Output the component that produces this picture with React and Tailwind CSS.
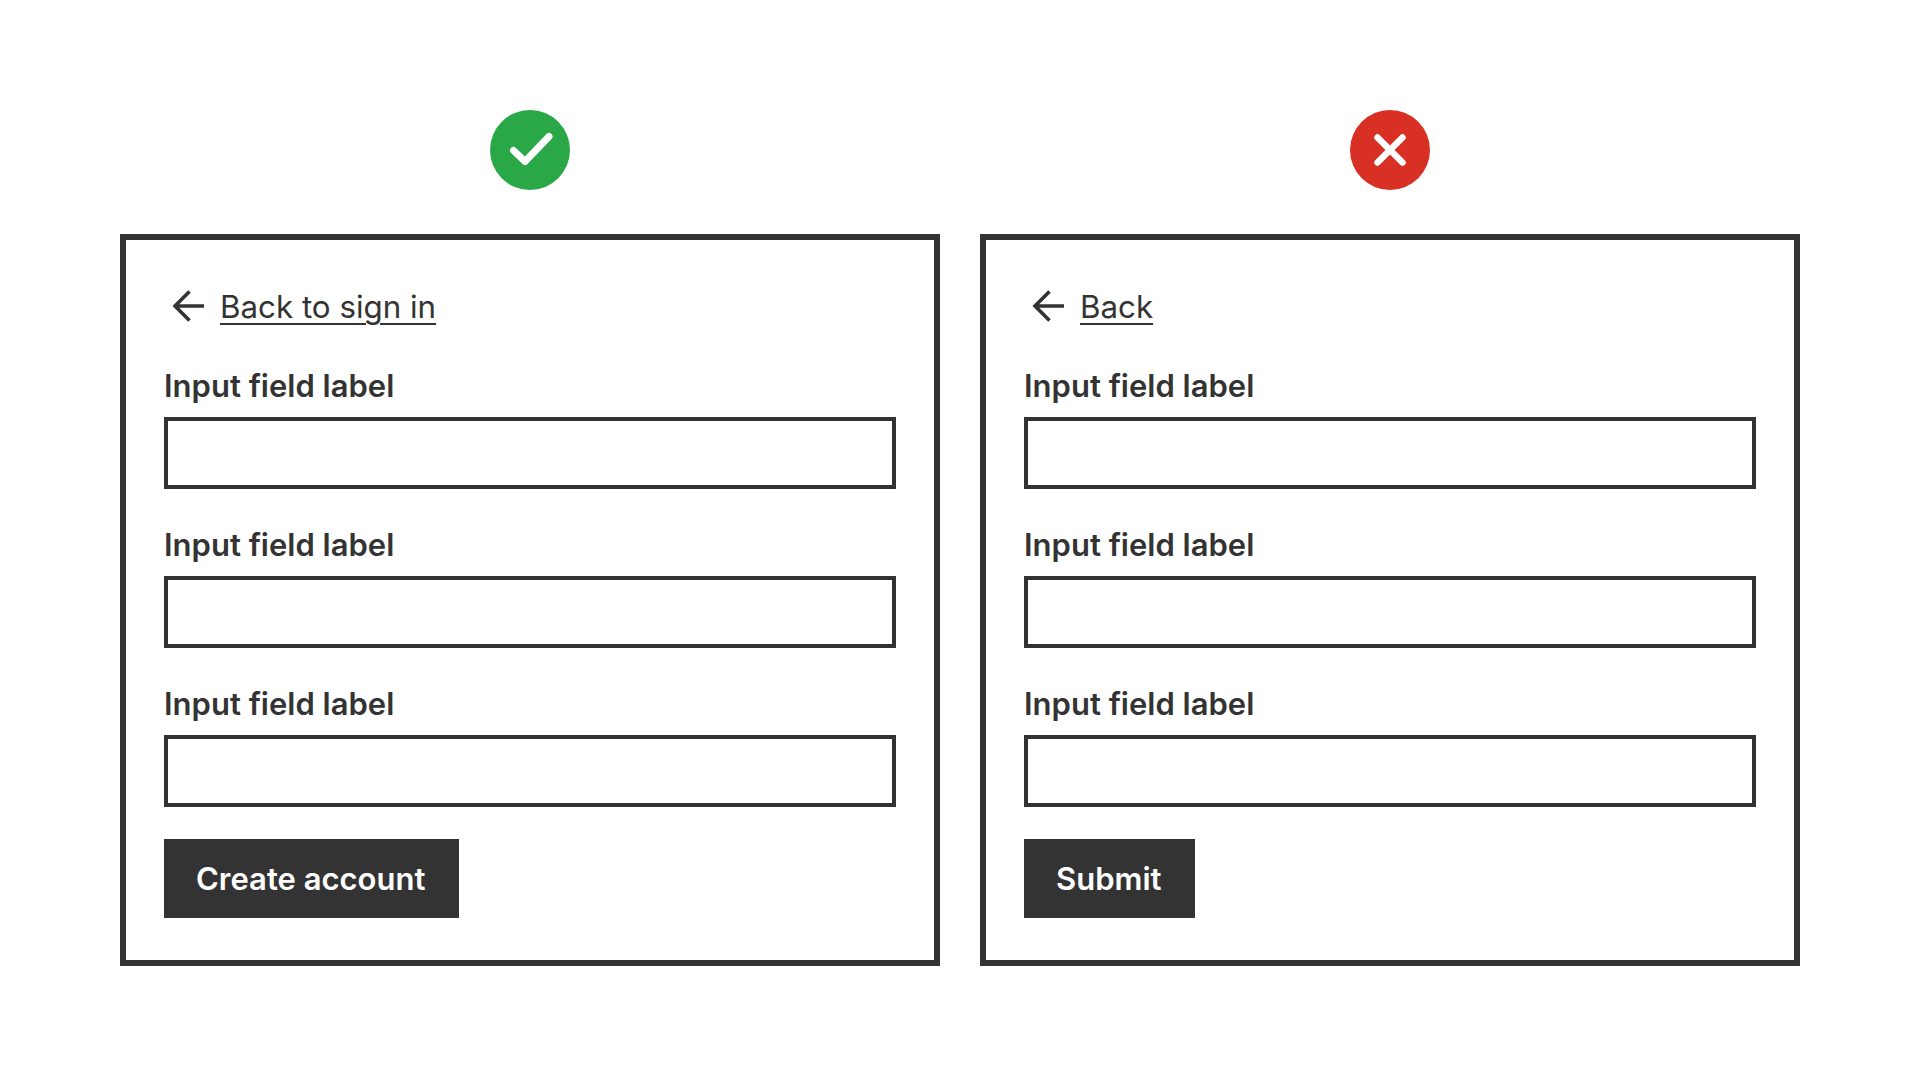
import React from 'react';

const Field = () => (
  <div>
    <div className="h-[40px] mb-[11px] text-[31px] leading-[40px] font-semibold text-[#333333]">Input field label</div>
    <div className="h-[72px] border-4 border-[#333333] bg-white"></div>
  </div>
);

const Panel = ({ status, backText, buttonText }) => (
  <div className="w-[820px] flex flex-col items-center">
    {status === 'good' ? (
      <svg width="80" height="80" viewBox="0 0 80 80" className="mb-[44px]">
        <circle cx="40" cy="40" r="40" fill="#2aa847" />
        <path d="M23.5 40.5L35 51.5L59 26.5" fill="none" stroke="white" strokeWidth="7" strokeLinecap="round" strokeLinejoin="round" />
      </svg>
    ) : (
      <svg width="80" height="80" viewBox="0 0 80 80" className="mb-[44px]">
        <circle cx="40" cy="40" r="40" fill="#d93026" />
        <path d="M27.5 27.5L52.5 52.5M52.5 27.5L27.5 52.5" fill="none" stroke="white" strokeWidth="6.5" strokeLinecap="round" />
      </svg>
    )}
    <div className="w-full h-[732px] border-[6px] border-[#333333] bg-white pt-[46px] px-[38px]">
      <div className="h-[40px] flex items-center pl-[8px] gap-[16px] mb-[40px]">
        <svg width="32" height="32" viewBox="0 0 32 32" className="shrink-0">
          <path d="M3 16H32M17.5 1.5L3 16L17.5 30.5" fill="none" stroke="#333333" strokeWidth="3.6" />
        </svg>
        <span className="pt-[2px] text-[31.3px] leading-[40px] text-[#333333] underline decoration-2 underline-offset-[5px]">{backText}</span>
      </div>
      <div className="flex flex-col gap-[36px]">
        <Field />
        <Field />
        <Field />
      </div>
      <button className="mt-[32px] h-[79px] pl-[32px] pr-[34px] pt-[2px] bg-[#333333] text-white text-[31px] font-semibold">{buttonText}</button>
    </div>
  </div>
);

export default function App() {
  return (
    <div className="w-[1920px] h-[1080px] bg-white pt-[110px] pl-[120px] flex gap-[40px] font-['Inter',sans-serif]">
      <Panel status="good" backText="Back to sign in" buttonText="Create account" />
      <Panel status="bad" backText="Back" buttonText="Submit" />
    </div>
  );
}
